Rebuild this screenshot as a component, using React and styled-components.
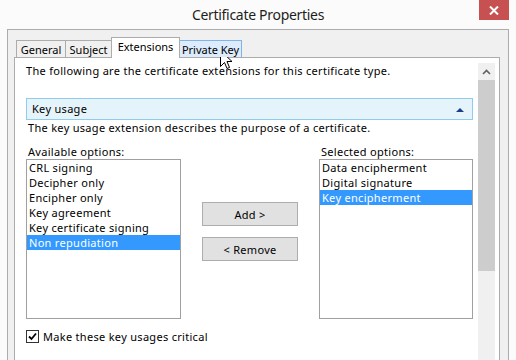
import React from 'react';
import styled, { createGlobalStyle } from 'styled-components';

const GlobalStyle = createGlobalStyle`
  html, body {
    margin: 0;
    padding: 0;
  }
  body {
    width: 516px;
    height: 360px;
    overflow: hidden;
    background: #fbfbfb;
    font-family: "Noto Sans", "Open Sans", sans-serif;
    font-size: 11px;
    letter-spacing: 0.3px;
    color: #000;
  }
`;

const Window = styled.div`
  position: relative;
  width: 516px;
  height: 360px;
  display: flex;
  flex-direction: column;
  background: #fbfbfb;
  overflow: hidden;
`;

const TitleBar = styled.div`
  height: 29px;
  display: grid;
  grid-template-columns: 1fr auto 1fr;
  align-items: start;
`;

const Title = styled.div`
  grid-column: 2;
  padding-top: 5px;
  font-size: 14px;
  letter-spacing: -0.3px;
  line-height: 20px;
  color: #1e1e1e;
`;

const CloseButton = styled.div`
  grid-column: 3;
  justify-self: end;
  margin-right: 7px;
  width: 30px;
  height: 20px;
  background: #c75050;
  display: flex;
  align-items: center;
  justify-content: center;
`;

const Body = styled.div`
  flex: 1;
  min-height: 0;
  margin: 0 7px 0 7px;
  border: 1px solid #acacac;
  border-bottom: none;
  background: #f0f0f0;
  padding: 7px 8px 0 6px;
  display: flex;
  flex-direction: column;
`;

const TabStrip = styled.div`
  height: 20px;
  display: flex;
  align-items: flex-end;
  padding-left: 2px;
`;

const Tab = styled.div`
  position: relative;
  box-sizing: border-box;
  width: ${p => p.$width}px;
  height: ${p => (p.$active ? 21 : 17)}px;
  margin-bottom: ${p => (p.$active ? -1 : 0)}px;
  margin-left: ${p => (p.$first ? 0 : -1)}px;
  z-index: ${p => (p.$active ? 2 : p.$hover ? 1 : 0)};
  border: 1px solid ${p => (p.$hover ? '#7eb4ea' : '#acacac')};
  border-bottom: none;
  background: ${p => (p.$active ? '#ffffff' : p.$hover ? '#dcecfc' : '#f0f0f0')};
  display: flex;
  align-items: center;
  justify-content: center;
  padding-bottom: ${p => (p.$active ? 3 : 0)}px;
  line-height: 15px;
  letter-spacing: 0;
  white-space: nowrap;
`;

const Panel = styled.div`
  flex: 1;
  min-height: 0;
  border: 1px solid #acacac;
  border-bottom: none;
  background: #fff;
  padding: 5px 4px 0 0;
  display: flex;
`;

const Content = styled.div`
  flex: 1;
  min-width: 0;
  padding: 0 5px 0 11px;
  display: flex;
  flex-direction: column;
`;

const Intro = styled.div`
  line-height: 16px;
  white-space: nowrap;
`;

const SectionHeader = styled.div`
  margin-top: 19px;
  height: 22px;
  box-sizing: border-box;
  border: 1px solid #8fccee;
  background: #e5f3fb;
  padding: 0 8px 0 5px;
  display: flex;
  align-items: center;
  justify-content: space-between;
  line-height: 16px;
`;

const Description = styled.div`
  padding-left: 2px;
  line-height: 16px;
  white-space: nowrap;
`;

const OptionsGrid = styled.div`
  margin-top: 8px;
  display: grid;
  grid-template-columns: 155px 1fr 154px;
`;

const ListLabel = styled.div`
  padding-left: 2px;
  line-height: 15px;
  white-space: nowrap;
`;

const ListBox = styled.div`
  height: 160px;
  box-sizing: border-box;
  border: 1px solid #a0a0a0;
  background: #fff;
`;

const ListItem = styled.div`
  height: 15px;
  line-height: 15px;
  padding-left: 2px;
  white-space: nowrap;
  background: ${p => (p.$selected ? '#3399ff' : 'transparent')};
  color: ${p => (p.$selected ? '#fff' : '#000')};
`;

const ButtonColumn = styled.div`
  padding-top: 43px;
  display: flex;
  flex-direction: column;
  align-items: center;
  gap: 11px;
`;

const Button = styled.div`
  width: 96px;
  height: 24px;
  box-sizing: border-box;
  border: 1px solid #adadad;
  background: #e1e1e1;
  display: flex;
  align-items: center;
  justify-content: center;
  line-height: 15px;
`;

const CheckRow = styled.div`
  margin-top: 10px;
  display: flex;
  align-items: center;
  gap: 4px;
  line-height: 15px;
`;

const CheckBox = styled.div`
  width: 13px;
  height: 13px;
  box-sizing: border-box;
  border: 1px solid #333;
  background: #fff;
  display: flex;
  align-items: center;
  justify-content: center;
`;

const ScrollBar = styled.div`
  width: 17px;
  display: flex;
  flex-direction: column;
  background: #f0f0f0;
`;

const ScrollArrow = styled.div`
  height: 17px;
  display: flex;
  align-items: center;
  justify-content: center;
`;

const ScrollThumb = styled.div`
  height: 191px;
  background: #cdcdcd;
`;

const Cursor = styled.svg`
  position: absolute;
  left: 220px;
  top: 50px;
  pointer-events: none;
`;

const availableOptions = [
  'CRL signing',
  'Decipher only',
  'Encipher only',
  'Key agreement',
  'Key certificate signing',
  'Non repudiation'
];

const selectedOptions = [
  'Data encipherment',
  'Digital signature',
  'Key encipherment'
];

const tabs = [
  { label: 'General', width: 50 },
  { label: 'Subject', width: 47 },
  { label: 'Extensions', width: 69, active: true },
  { label: 'Private Key', width: 63, hover: true }
];

const App = () => (
  <Window>
    <GlobalStyle />
    <TitleBar>
      <Title>Certificate Properties</Title>
      <CloseButton>
        <svg width="10" height="9" viewBox="0 0 10 9">
          <path d="M1 0.5 L9 8.5 M9 0.5 L1 8.5" stroke="#fff" strokeWidth="2" />
        </svg>
      </CloseButton>
    </TitleBar>
    <Body>
      <TabStrip>
        {tabs.map((tab, i) => (
          <Tab key={tab.label} $width={tab.width} $active={tab.active} $hover={tab.hover} $first={i === 0}>
            {tab.label}
          </Tab>
        ))}
      </TabStrip>
      <Panel>
        <Content>
          <Intro>The following are the certificate extensions for this certificate type.</Intro>
          <SectionHeader>
            <span>Key usage</span>
            <svg width="8" height="5" viewBox="0 0 8 5">
              <path d="M0 5 L4 1 L8 5 Z" fill="#1a3d8f" />
            </svg>
          </SectionHeader>
          <Description>The key usage extension describes the purpose of a certificate.</Description>
          <OptionsGrid>
            <ListLabel>Available options:</ListLabel>
            <div />
            <ListLabel>Selected options:</ListLabel>
            <ListBox>
              {availableOptions.map((opt, i) => (
                <ListItem key={opt} $selected={i === availableOptions.length - 1}>{opt}</ListItem>
              ))}
            </ListBox>
            <ButtonColumn>
              <Button>Add &gt;</Button>
              <Button>&lt; Remove</Button>
            </ButtonColumn>
            <ListBox>
              {selectedOptions.map((opt, i) => (
                <ListItem key={opt} $selected={i === 2}>{opt}</ListItem>
              ))}
            </ListBox>
          </OptionsGrid>
          <CheckRow>
            <CheckBox>
              <svg width="9" height="9" viewBox="0 0 9 9">
                <path d="M1 4.5 L3.5 7 L8 1.5" stroke="#000" strokeWidth="1.8" fill="none" />
              </svg>
            </CheckBox>
            <span>Make these key usages critical</span>
          </CheckRow>
        </Content>
        <ScrollBar>
          <ScrollArrow>
            <svg width="9" height="6" viewBox="0 0 9 6">
              <path d="M1 5 L4.5 1.5 L8 5" stroke="#606060" strokeWidth="1.6" fill="none" />
            </svg>
          </ScrollArrow>
          <ScrollThumb />
        </ScrollBar>
      </Panel>
    </Body>
    <Cursor width="13" height="20" viewBox="0 0 13 20">
      <path d="M0.5 0.5 L0.5 16.5 L4.5 12.5 L7 18.5 L9.5 17.5 L7 11.5 L12 11.5 Z" fill="#fff" stroke="#000" strokeWidth="1" strokeLinejoin="miter" />
    </Cursor>
  </Window>
);

export default App;
